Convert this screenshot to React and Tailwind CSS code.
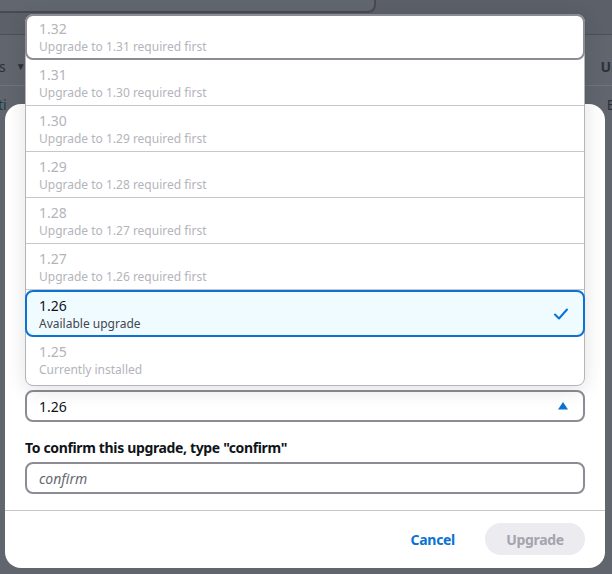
import React from "react";

const versions = [
  { v: "1.32", note: "Upgrade to 1.31 required first", state: "hover" },
  { v: "1.31", note: "Upgrade to 1.30 required first" },
  { v: "1.30", note: "Upgrade to 1.29 required first" },
  { v: "1.29", note: "Upgrade to 1.28 required first" },
  { v: "1.28", note: "Upgrade to 1.27 required first" },
  { v: "1.27", note: "Upgrade to 1.26 required first" },
  { v: "1.26", note: "Available upgrade", state: "selected" },
  { v: "1.25", note: "Currently installed", state: "last" },
];

const Check = () => (
  <svg width="16" height="16" viewBox="0 0 16 16" fill="none">
    <polyline points="2,8.5 6,12.5 14,3.5" stroke="#0972d3" strokeWidth="2" strokeLinecap="round" strokeLinejoin="round" />
  </svg>
);

const Caret = () => (
  <svg width="12" height="10" viewBox="0 0 12 10">
    <polygon points="6,1 11,8.5 1,8.5" fill="#0972d3" />
  </svg>
);

const Option = ({ item }) => {
  if (item.state === "selected") {
    return (
      <div className="relative -mx-px h-[47px] flex items-center justify-between border-2 border-[#0972d3] rounded-lg bg-[#f0fbff] pl-[12px] pr-[14px]">
        <div className="flex flex-col">
          <span className="text-[14px] leading-[20px] text-[#0f141a]">{item.v}</span>
          <span className="text-[12px] leading-[16px] text-[#424650]">{item.note}</span>
        </div>
        <Check />
      </div>
    );
  }
  let cls = "h-[46px] flex flex-col justify-center px-[13px] border-b border-[#c6c6cd]";
  if (item.state === "hover") cls = "-mx-px -mt-px h-[46px] flex flex-col justify-center border-2 border-[#8c8c94] rounded-lg pl-[12px]";
  if (item.state === "last") cls = "h-[48px] flex flex-col justify-center px-[13px] pb-[2px]";
  return (
    <div className={cls}>
      <span className="text-[14px] leading-[20px] text-[#b4b4bb]">{item.v}</span>
      <span className="text-[12px] leading-[16px] text-[#b4b4bb]">{item.note}</span>
    </div>
  );
};

export default function App() {
  return (
    <div className="relative w-[612px] h-[574px] overflow-hidden bg-[#61656d] font-['Noto_Sans',sans-serif]">
      {/* page behind the overlay */}
      <div className="flex flex-col">
        <div className="h-[35px] border-b border-[#4b4f57] bg-[#5c6068]">
          <div className="w-[376px] h-[13px] border-b-2 border-r-2 border-[#474a52] rounded-br-lg bg-[#62666e]" />
        </div>
        <div className="h-[51px] flex items-end justify-between pb-[8px] border-b border-[#6f737b] text-[14px] text-[#2c3038]">
          <span className="-ml-[1px] flex items-center gap-[10px]">
            s <span className="text-[10px]">▼</span>
          </span>
          <span className="font-bold mr-[-8px]">Up</span>
        </div>
        <div className="h-[36px] flex items-center justify-between text-[14px]">
          <span className="-ml-[2px] text-[#1d3d3f]">ti</span>
          <span className="text-[#2c3038] mr-[-10px]">Ex</span>
        </div>
      </div>

      {/* modal */}
      <div className="absolute inset-0 pl-[5px] pr-[7px] pt-[104px] pb-[6px] flex flex-col">
        <div className="flex-1 bg-white rounded-2xl flex flex-col">
          <div className="h-[286px]" />

          <div className="relative mx-[20px]">
            <div className="absolute left-0 right-0 bottom-full mb-[4px] bg-white border border-[#b4b4bb] rounded-lg shadow-[0_4px_20px_rgba(0,7,22,0.12)]">
              {versions.map((item) => (
                <Option key={item.v} item={item} />
              ))}
            </div>
            <div className="h-[32px] flex items-center justify-between border-2 border-[#8c8c94] rounded-lg pl-[12px] pr-[14px]">
              <span className="text-[14px] text-[#0f141a]">1.26</span>
              <Caret />
            </div>
          </div>

          <div className="mx-[20px] mt-[16px]">
            <label className="block text-[14px] leading-[20px] font-bold tracking-[-0.35px] text-[#0f141a]">
              To confirm this upgrade, type "confirm"
            </label>
            <div className="mt-[4px] h-[32px] flex items-center border-2 border-[#8c8c94] rounded-lg pl-[12px]">
              <span className="text-[14px] italic text-[#656871]">confirm</span>
            </div>
          </div>

          <div className="mt-[16px] border-t border-[#c6c6cd] flex items-center justify-end gap-[10px] pt-[12px] pr-[20px]">
            <button className="h-[32px] px-[20px] text-[14px] font-bold tracking-[-0.3px] text-[#0972d3]">Cancel</button>
            <button className="h-[32px] w-[100px] rounded-full bg-[#ebebf0] text-[14px] font-bold tracking-[-0.3px] text-[#a4a4ad]">Upgrade</button>
          </div>
        </div>
      </div>
    </div>
  );
}
